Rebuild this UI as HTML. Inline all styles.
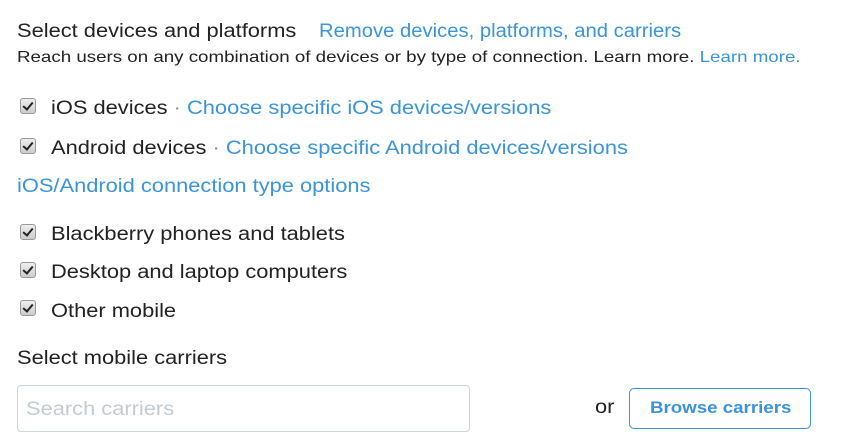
<!DOCTYPE html>
<html><head><style>
body{margin:0;width:858px;height:444px;background:#fff;font-family:"Liberation Sans",Arial,sans-serif;color:#222;position:relative;overflow:hidden}
.a{position:absolute;white-space:nowrap;transform-origin:0 50%;transform:scaleX(1.15)}
.l{color:#3b94d9}
.t{font-size:19px}
.cb{position:absolute;left:20px;width:14px;height:14px;border:1px solid #999;border-radius:3px;background:linear-gradient(#eee,#ccc);}
.cb:after{content:"";position:absolute;left:4px;top:1px;width:4px;height:8px;border:solid #222;border-width:0 2px 2px 0;transform:rotate(40deg)}
.box{position:absolute}
</style></head><body>
<div class="a t" style="left:17px;top:21px">Select devices and platforms</div>
<div class="a t l" style="left:319px;top:21px;transform:scaleX(1.065)">Remove devices, platforms, and carriers</div>
<div class="a" style="left:17px;top:49px;font-size:16px;transform:scaleX(1.17)">Reach users on any combination of devices or by type of connection. Learn more. <span class="l">Learn more.</span></div>
<div class="cb" style="top:98px"></div>
<div class="a t" style="left:51px;top:98px">iOS devices <span style="color:#888">·</span> <span class="l">Choose specific iOS devices/versions</span></div>
<div class="cb" style="top:138px"></div>
<div class="a t" style="left:51px;top:138px">Android devices <span style="color:#888">·</span> <span class="l">Choose specific Android devices/versions</span></div>
<div class="a t l" style="left:17px;top:176px">iOS/Android connection type options</div>
<div class="cb" style="top:224px"></div>
<div class="a t" style="left:51px;top:224px">Blackberry phones and tablets</div>
<div class="cb" style="top:262px"></div>
<div class="a t" style="left:51px;top:262px">Desktop and laptop computers</div>
<div class="cb" style="top:300px"></div>
<div class="a t" style="left:51px;top:301px">Other mobile</div>
<div class="a t" style="left:17px;top:348px">Select mobile carriers</div>
<div class="box" style="left:17px;top:385px;width:451px;height:45px;border:1px solid #ccd6dd;border-radius:4px"></div>
<div class="a t" style="left:26px;top:399px;color:#c3ccd3">Search carriers</div>
<div class="a t" style="left:595px;top:397px">or</div>
<div class="box" style="left:629px;top:388px;width:180px;height:39px;border:1px solid #3b94d9;border-radius:5px"></div>
<div class="a" style="left:650px;top:398px;color:#3b94d9;font-weight:bold;font-size:17px;transform:scaleX(1.1)">Browse carriers</div>
</body></html>
